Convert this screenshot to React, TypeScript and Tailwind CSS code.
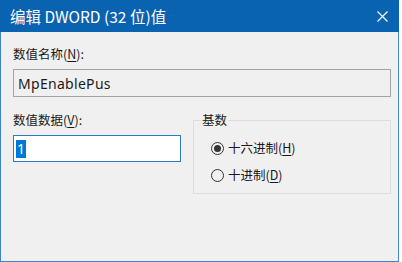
import React from "react";

const cjk = "font-['Microsoft_YaHei_UI','Noto_Sans_CJK_SC',sans-serif]";

function Radio({ checked, label, hotkey }: { checked: boolean; label: string; hotkey: string }) {
  return (
    <div className="flex items-center h-[16px]">
      <span className="w-[13px] h-[13px] rounded-full border border-[#333] bg-[#f0f0f0] flex items-center justify-center ml-[17px]">
        {checked && <span className="w-[7px] h-[7px] rounded-full bg-[#333]" />}
      </span>
      <span className="ml-[4px] text-[12.5px] leading-[16px] text-[#1a1a1a]">
        {label}(<span className="underline underline-offset-2">{hotkey}</span>)
      </span>
    </div>
  );
}

export default function App() {
  return (
    <div className={`w-[402px] h-[262px] bg-white ${cjk}`}>
      <div className="w-[399px] h-[262px] flex flex-col bg-[#f0f0f0] border-x border-b border-[#3f84c6]">
        {/* title bar */}
        <div className="h-[32px] shrink-0 bg-[#0a63b0] flex items-center justify-between pl-[10px] pr-[8px] -mx-px">
          <span className="text-white text-[15.5px] leading-[18px]">编辑 DWORD (32 位)值</span>
          <svg width="11" height="11" viewBox="0 0 11 11" className="mr-[3px]">
            <path d="M0.5 0.5 L10.5 10.5 M10.5 0.5 L0.5 10.5" stroke="#fff" strokeWidth="1.2" />
          </svg>
        </div>

        <div className="flex flex-col pl-[12px] pr-[7px] pt-[14px] text-[#1a1a1a]">
          <div className="text-[12.5px] leading-[16px]">
            数值名称(<span className="underline underline-offset-2">N</span>):
          </div>
          <div className="mt-[7px] h-[28px] border border-[#a3a3a3] bg-[#f0f0f0] flex items-center pl-[4px] text-[14px] tracking-[0.3px] font-['Noto_Sans','Open_Sans',sans-serif] text-[#1a1a1a]">
            MpEnablePus
          </div>

          <div className="mt-[15px] flex items-start">
            <div className="w-[168px] flex flex-col">
              <div className="text-[12.5px] leading-[16px]">
                数值数据(<span className="underline underline-offset-2">V</span>):
              </div>
              <div className="mt-[7px] h-[27px] border border-[#2f78c2] bg-white flex items-center pl-[2px]">
                <span className="bg-[#0078d7] text-white text-[14px] leading-[18px] px-[1px] font-['Noto_Sans','Open_Sans',sans-serif]">1</span>
              </div>
            </div>

            <fieldset className="ml-[12px] flex-1 h-[82px] border border-[#dcdcdc] flex flex-col">
              <legend className="ml-[7px] px-[1px] text-[12.5px] leading-[16px]">基数</legend>
              <div className="pt-[12px] flex flex-col gap-[11px]">
                <Radio checked label="十六进制" hotkey="H" />
                <Radio checked={false} label="十进制" hotkey="D" />
              </div>
            </fieldset>
          </div>
        </div>
      </div>
    </div>
  );
}
